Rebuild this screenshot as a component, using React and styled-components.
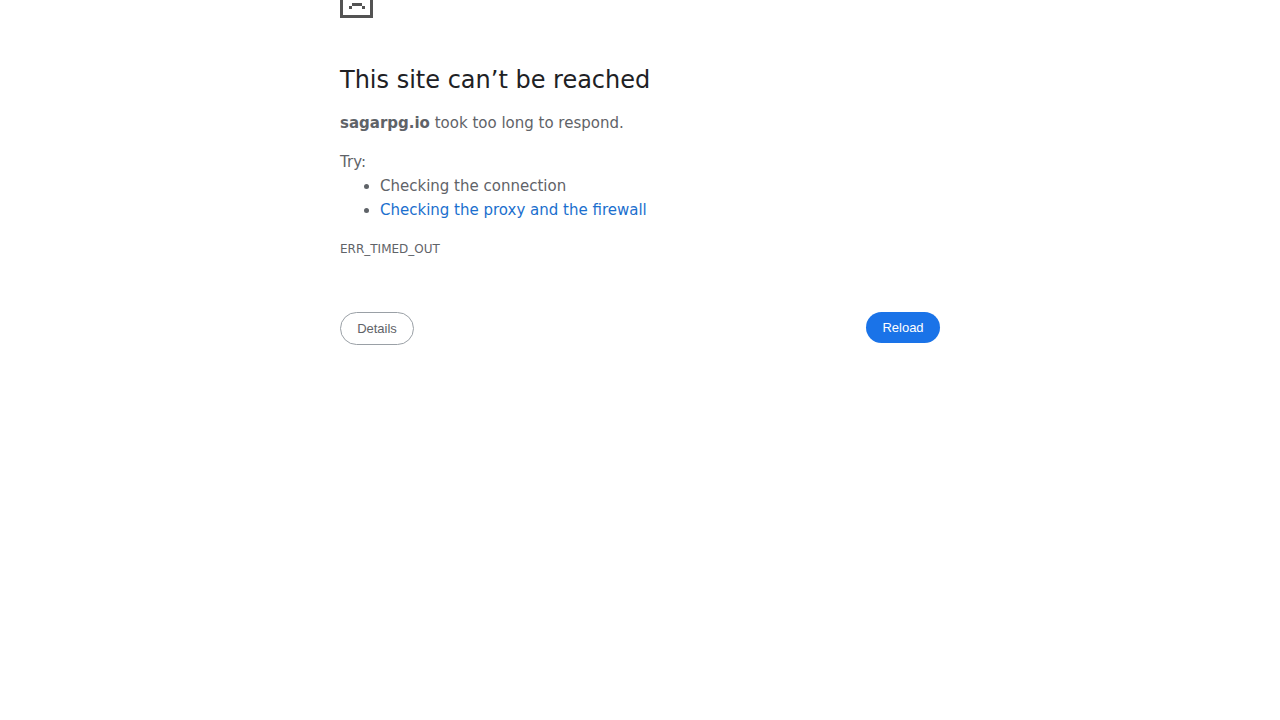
import React from 'react'
import styled, { createGlobalStyle } from 'styled-components'

function App() {
    return (
        <>
            <GlobalStyle />
            <Wrapper>
                <Icon viewBox='0 0 33 18' shapeRendering='crispEdges' aria-hidden='true'>
                    <path d='M0 0h3v15h27V0h3v18H0z' />
                    <path d='M12 3h10v3H12zM9 6h3v3H9zM22 6h3v3h-3z' />
                </Icon>
                <Heading>This site can’t be reached</Heading>
                <Text><strong>sagarpg.io</strong> took too long to respond.</Text>
                <Suggestions>
                    <div>Try:</div>
                    <List>
                        <li>Checking the connection</li>
                        <li><Link href='#buttons'>Checking the proxy and the firewall</Link></li>
                    </List>
                </Suggestions>
                <ErrorCode>ERR_TIMED_OUT</ErrorCode>
                <Buttons id='buttons'>
                    <Button type='button'>Details</Button>
                    <Button type='button' $primary onClick={() => window.location.reload()}>Reload</Button>
                </Buttons>
            </Wrapper>
        </>
    )
}

const GlobalStyle = createGlobalStyle`
  body {
    margin: 0;
    background: #fff;
    color: #5f6368;
    font-family: "DejaVu Sans", sans-serif;
    font-size: 15px;
    line-height: 24px;
  }
`;
const Wrapper = styled.main`
  box-sizing: border-box;
  max-width: 600px;
  margin: 0 auto;
`;
const Icon = styled.svg`
  display: block;
  width: 33px;
  height: 18px;
  margin-bottom: 47px;
  fill: #535353;
`;
const Heading = styled.h1`
  margin: 0 0 16px;
  color: #202124;
  font-size: 24px;
  font-weight: 500;
  line-height: 30px;
`;
const Text = styled.p`
  margin: 0 0 15px;
`;
const Suggestions = styled.div`
  margin-bottom: 15px;
`;
const List = styled.ul`
  margin: 0;
  padding-left: 40px;
`;
const Link = styled.a`
  color: #1b6fce;
  text-decoration: none;
`;
const ErrorCode = styled.div`
  font-size: 12px;
`;
const Buttons = styled.div`
  display: flex;
  justify-content: space-between;
  align-items: flex-start;
  margin-top: 51px;
`;
const Button = styled.button`
  min-width: 74px;
  padding: 8px 16px;
  border: ${props => props.$primary ? '0' : '1px solid #9aa0a6'};
  border-radius: 20px;
  background: ${props => props.$primary ? '#1a73e8' : '#fff'};
  color: ${props => props.$primary ? '#fff' : '#5f6368'};
  font-family: "Liberation Sans", Arial, sans-serif;
  font-size: 13px;
  line-height: 15px;
  cursor: pointer;
`;
export default App
